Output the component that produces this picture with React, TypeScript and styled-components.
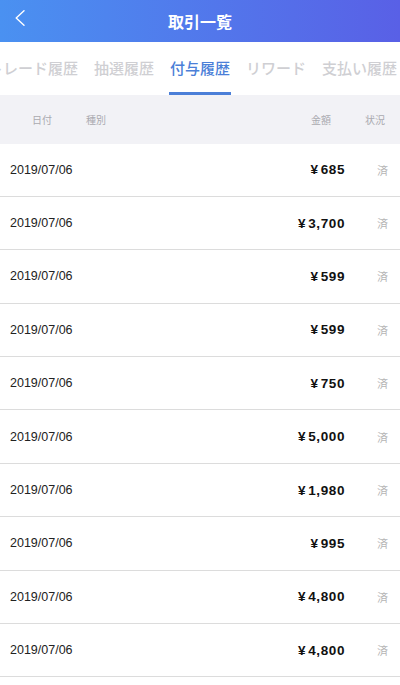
import React from 'react'
import styled, { createGlobalStyle } from 'styled-components'

const GlobalStyle = createGlobalStyle`
  body {
    margin: 0;
    background: #fff;
    font-family: "Liberation Sans", "Noto Sans CJK JP", sans-serif;
  }
`

const Page = styled.div`
  width: 400px;
  height: 685px;
  overflow: hidden;
  background: #fff;
`

const Header = styled.header`
  height: 42px;
  display: flex;
  align-items: center;
  justify-content: center;
  position: relative;
  background: linear-gradient(90deg, #4a91f1 0%, #5960e6 100%);
`

const BackButton = styled.button`
  position: absolute;
  left: 15px;
  top: 10px;
  border: none;
  background: none;
  padding: 0;
  width: 10px;
  height: 16px;
  display: flex;
`

const Title = styled.h1`
  margin: 0;
  color: #fff;
  font-size: 16px;
  font-weight: 700;
  font-family: "Noto Sans CJK JP", sans-serif;
`

const TabBar = styled.nav`
  height: 53px;
  overflow: hidden;
  background: #fff;
`

const TabTrack = styled.div`
  display: flex;
  gap: 16px;
  margin-left: -12px;
  height: 100%;
`

const Tab = styled.div<{ $active?: boolean }>`
  position: relative;
  flex: none;
  display: flex;
  align-items: center;
  padding-bottom: 2px;
  font-family: "Noto Sans CJK JP", sans-serif;
  font-size: 15px;
  font-weight: 500;
  color: ${p => (p.$active ? '#4b7fd8' : '#cfcfd3')};
  &::after {
    content: '';
    display: ${p => (p.$active ? 'block' : 'none')};
    position: absolute;
    left: -1px;
    right: -1px;
    bottom: 0;
    height: 3px;
    background: #4b7fd8;
  }
`

const TableHead = styled.div`
  height: 48.5px;
  background: #f2f2f6;
  display: grid;
  grid-template-columns: 32px 54px 1fr 54px 35px;
  align-items: center;
  font-family: "Noto Sans CJK JP", sans-serif;
  font-size: 10px;
  color: #aaaab0;
`

const Row = styled.div`
  height: 53.4px;
  box-sizing: border-box;
  border-bottom: 1px solid #dcdcdc;
  display: flex;
  align-items: center;
  padding: 0 12px 0 10px;
`

const DateText = styled.span`
  flex: 1;
  font-size: 12.5px;
  color: #222;
`

const Amount = styled.span`
  font-size: 13.5px;
  font-weight: 700;
  letter-spacing: 0.6px;
  color: #111;
`

const Yen = styled.span`
  margin-right: 2px;
`

const Status = styled.span`
  width: 43px;
  text-align: right;
  font-family: "Noto Sans CJK JP", sans-serif;
  font-size: 11px;
  color: #b5b5b5;
`

const tabs = ['トレード履歴', '抽選履歴', '付与履歴', 'リワード', '支払い履歴']

const rows = ['685', '3,700', '599', '599', '750', '5,000', '1,980', '995', '4,800', '4,800']

export default function App () {
  return (
    <Page>
      <GlobalStyle />
      <Header>
        <BackButton aria-label="back">
          <svg width="10" height="16" viewBox="0 0 10 16">
            <path d="M9 0.8 L1.2 8 L9 15.2" fill="none" stroke="#fff" strokeWidth="1.4" strokeLinecap="round" strokeLinejoin="round" />
          </svg>
        </BackButton>
        <Title>取引一覧</Title>
      </Header>
      <TabBar>
        <TabTrack>
          {tabs.map(t => (
            <Tab key={t} $active={t === '付与履歴'}>{t}</Tab>
          ))}
        </TabTrack>
      </TabBar>
      <TableHead>
        <span />
        <span>日付</span>
        <span>種別</span>
        <span>金額</span>
        <span>状況</span>
      </TableHead>
      {rows.map((amt, i) => (
        <Row key={i}>
          <DateText>2019/07/06</DateText>
          <Amount><Yen>¥</Yen>{amt}</Amount>
          <Status>済</Status>
        </Row>
      ))}
    </Page>
  )
}
